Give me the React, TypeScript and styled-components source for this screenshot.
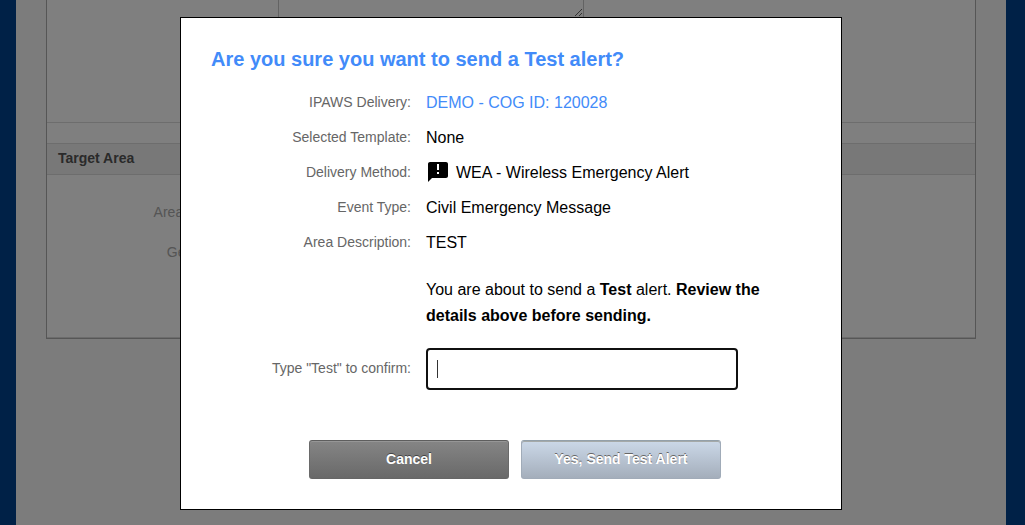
import React from 'react';
import styled, { createGlobalStyle, css } from 'styled-components';

const GlobalStyle = createGlobalStyle`
  * { box-sizing: border-box; }
  body {
    margin: 0;
    background: #00438f;
    font-family: "Liberation Sans", Arial, Helvetica, sans-serif;
    font-size: 16px;
    color: #000;
    overflow: hidden;
  }
`;

const Page = styled.div`
  padding: 0 19px 0 16px;
`;

const Content = styled.main`
  min-height: 100vh;
  max-width: 990px;
  margin: 0 auto;
  padding: 0 30px;
  background: #f8f8f8;
`;

const FormPanel = styled.div`
  background: #fff;
  border: 1px solid #acacac;
  border-top: 0;
  box-shadow: inset 0 -1px 0 #d8d8d8;
`;

const MessageSection = styled.section`
  height: 123px;
  padding-left: 231px;
  border-bottom: 1px solid #dadada;
`;

const MessageBox = styled.textarea`
  display: block;
  width: 306px;
  height: 18px;
  border: 1px solid #c6c6c6;
  border-top: 0;
  background: #fff;
  overflow: hidden;
  resize: both;
`;

const SectionHeading = styled.h2`
  margin: 20px 0 0;
  padding: 0 11px 2px;
  border: 1px solid #dadada;
  border-width: 1px 0;
  background: #f0f0f0;
  font-size: 14px;
  line-height: 28px;
  color: #555;
`;

const TargetFields = styled.dl`
  margin: 0;
  padding: 17px 0 66px;
`;

const TargetField = styled.dt`
  width: 214px;
  text-align: right;
  font-size: 14px;
  line-height: 40px;
  color: #aaa;
`;

const Backdrop = styled.div`
  position: fixed;
  inset: 0;
  padding: 17px 19px 0 16px;
  background: rgba(0, 0, 0, 0.5);
`;

const Dialog = styled.form`
  max-width: 662px;
  margin: 0 auto;
  padding: 26px 30px 30px;
  border: 1px solid #000;
  background: #fff;
`;

const Title = styled.h1`
  margin: 0 0 11px;
  font-size: 20px;
  line-height: 30px;
  color: #428bf9;
`;

const Details = styled.dl`
  display: grid;
  grid-template-columns: 200px 1fr;
  column-gap: 15px;
  margin: 0;
  line-height: 35px;
`;

const labelText = css`
  text-align: right;
  font-size: 14px;
  color: #666;
`;

const Term = styled.dt`
  ${labelText}
`;

const Value = styled.dd<{ $accent?: boolean }>`
  display: flex;
  gap: 6px;
  margin: 0;
  color: ${(p) => (p.$accent ? '#428bf9' : '#000')};

  svg {
    flex: none;
    margin-top: 5px;
  }
`;

const Notice = styled.p`
  margin: 17px 40px 19px 215px;
  line-height: 26px;
`;

const ConfirmRow = styled.div`
  display: grid;
  grid-template-columns: 200px 312px;
  column-gap: 15px;
  align-items: center;
`;

const ConfirmLabel = styled.label`
  ${labelText}
  padding-bottom: 2px;
`;

const ConfirmInput = styled.input`
  height: 42px;
  padding: 0 9px;
  border: 2px solid #101010;
  border-radius: 4px;
  outline: none;
  background: #fff;
  font: inherit;

  /* steady, non-blinking caret while the field is empty */
  &:placeholder-shown {
    caret-color: transparent;
    background: linear-gradient(#333, #333) 9px 10px / 1px 18px no-repeat #fff;
  }
`;

const Actions = styled.div`
  display: flex;
  justify-content: center;
  gap: 12px;
  margin-top: 50px;
  padding-left: 8px;
`;

const Button = styled.button<{ $tone: 'neutral' | 'primary' }>`
  width: 200px;
  height: 39px;
  padding: 0 0 2px;
  border: 1px solid;
  border-radius: 3px;
  font: bold 14px/20px "Liberation Sans", Arial, sans-serif;
  color: #fff;
  ${(p) =>
    p.$tone === 'neutral'
      ? css`
          border-color: #5e5e5e #6a6a6a #666;
          background: linear-gradient(#858585, #696969);
          box-shadow: inset 0 1px 0 #969696;
          text-shadow: 0 -1px 0 #444;
        `
      : css`
          border-color: #93a0aa #a0abb8 #a1abb8;
          background: linear-gradient(#cbd8e8, #a4aebb);
          box-shadow: inset 0 1px 0 #a5a9a8;
          text-shadow: 0 -1px 0 #666;
        `}
`;

const AlertIcon = () => (
  <svg width="24" height="24" viewBox="0 0 24 24" aria-hidden="true">
    <path
      fill="#000"
      d="M20 2H4c-1.1 0-1.99.9-1.99 2L2 22l4-4h14c1.1 0 2-.9 2-2V4c0-1.1-.9-2-2-2zm-7 12h-2v-2h2v2zm0-4h-2V4h2v6z"
    />
  </svg>
);

export default function App() {
  return (
    <>
      <GlobalStyle />
      <Page>
        <Content>
          <FormPanel>
            <MessageSection>
              <MessageBox aria-label="Message" />
            </MessageSection>
            <SectionHeading>Target Area</SectionHeading>
            <TargetFields>
              <TargetField>Area Description:</TargetField>
              <TargetField>Geo Locations:</TargetField>
            </TargetFields>
          </FormPanel>
        </Content>
      </Page>
      <Backdrop>
        <Dialog role="dialog" aria-modal="true" aria-labelledby="dialog-title" onSubmit={(e) => e.preventDefault()}>
          <Title id="dialog-title">Are you sure you want to send a Test alert?</Title>
          <Details>
            <Term>IPAWS Delivery:</Term>
            <Value $accent>DEMO - COG ID: 120028</Value>
            <Term>Selected Template:</Term>
            <Value>None</Value>
            <Term>Delivery Method:</Term>
            <Value>
              <AlertIcon />
              WEA - Wireless Emergency Alert
            </Value>
            <Term>Event Type:</Term>
            <Value>Civil Emergency Message</Value>
            <Term>Area Description:</Term>
            <Value>TEST</Value>
          </Details>
          <Notice>
            You are about to send a <b>Test</b> alert. <b>Review the details above before sending.</b>
          </Notice>
          <ConfirmRow>
            <ConfirmLabel htmlFor="confirm">Type "Test" to confirm:</ConfirmLabel>
            <ConfirmInput id="confirm" type="text" placeholder=" " autoComplete="off" autoFocus />
          </ConfirmRow>
          <Actions>
            <Button type="button" $tone="neutral">Cancel</Button>
            <Button type="submit" $tone="primary">Yes, Send Test Alert</Button>
          </Actions>
        </Dialog>
      </Backdrop>
    </>
  );
}
